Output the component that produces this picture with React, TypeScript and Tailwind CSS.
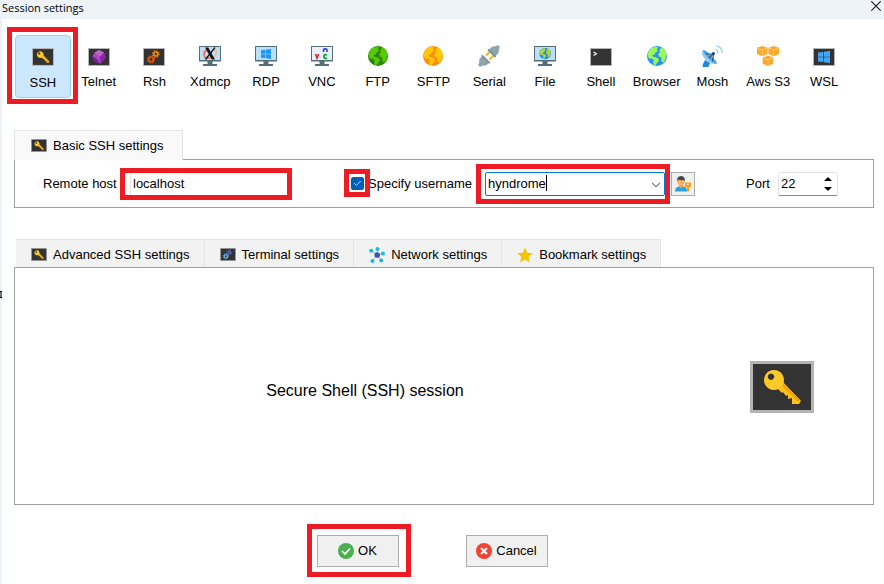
import React, { useState } from 'react';
import { Check, ChevronDown } from 'lucide-react';

interface IconProps {
  className?: string;
}

function Highlight({ className }: { className: string }) {
  return <span aria-hidden="true" className={`pointer-events-none absolute z-10 border-5 border-[#ed1c24] ${className}`} />;
}

function KeyIcon({ className }: IconProps) {
  return (
    <svg viewBox="0 0 64 52" className={className}>
      <rect width="64" height="52" fill="#b4b4b4" />
      <rect x="3" y="3" width="58" height="46" fill="#333" />
      <path d="M27 27 L32 32 L33 31 L36 35 L38 34 L38 38 L42 37 L42 43 L49 43 L51 40 L33 21 Z" fill="#ffc21c" />
      <path d="M31 24 L34 23 L50 39 L48 41 Z" fill="#eda512" />
      <path fillRule="evenodd" d="M24 9 a10 10 0 1 0 .01 0 Z M21 12.5 a3.2 3.2 0 1 1 -.01 0 Z" fill="#ffca28" />
    </svg>
  );
}

function TerminalBox({ className, children }: { className?: string; children: React.ReactNode }) {
  return (
    <svg viewBox="0 0 22 18" className={className}>
      <rect width="22" height="18" fill="#b4b4b4" />
      <rect x="1" y="1" width="20" height="16" fill="#333" />
      {children}
    </svg>
  );
}

function Gears({ front, back }: { front: string; back: string }) {
  return (
    <g fill="none">
      <circle cx="8" cy="11.5" r="2.3" stroke={front} strokeWidth="1.8" />
      <circle cx="8" cy="11.5" r="3.6" stroke={front} strokeWidth="1.3" strokeDasharray="1.4 1.43" />
      <circle cx="12.8" cy="6" r="2" stroke={back} strokeWidth="1.6" />
      <circle cx="12.8" cy="6" r="3.2" stroke={back} strokeWidth="1.2" strokeDasharray="1.3 1.21" />
    </g>
  );
}

function WindowsMark({ x, y, size, color }: { x: number; y: number; size: number; color: string }) {
  return (
    <svg x={x} y={y} width={size} height={size} viewBox="0 0 12 12">
      <path d="M0 1.6 L5.4 .9 V5.7 H0 Z M6 .8 L12 0 V5.7 H6 Z M0 6.3 H5.4 V11.1 L0 10.4 Z M6 6.3 H12 V12 L6 11.2 Z" fill={color} />
    </svg>
  );
}

function Monitor({ children, screen = '#bbdefb' }: { children: React.ReactNode; screen?: string }) {
  return (
    <svg viewBox="0 0 22 20" className="h-5 w-[22px]">
      <path d="M0 0 H22 V15.5 H0 Z M8.5 15 H13.5 V18 H8.5 Z M4 18 H18 V20 H4 Z" fill="#546e7a" />
      <rect x="1" y="1" width="20" height="13" fill={screen} />
      {children}
    </svg>
  );
}

function Globe({ water, land }: { water: string; land: string }) {
  return (
    <>
      <circle cx="10" cy="10" r="10" fill={water} />
      <path d="M8.8 .8 L4.2 2 L1.4 5.6 L.6 9 L2 12.6 L4.6 12.4 L7 14.2 L6.2 16.4 L7.2 19.4 L8.6 18.8 L11.8 14.8 L11.4 12.6 L8 11 L5.8 10.4 L5.4 9 L7.8 8.6 L8.4 6.6 L11 5 L9.8 3.4 L11.2 1.4 Z" fill={land} />
      <path d="M14 1.8 L12.2 4.2 L13 6 L11.2 8 L11.8 10.6 L14.4 11.4 L14.4 15 L16 16.8 L18.4 13.8 L18.8 10.4 L19.8 9 L18.8 5.2 L16.6 2.6 Z" fill={land} />
    </>
  );
}

function GlobeIcon({ water, land }: { water: string; land: string }) {
  return (
    <svg viewBox="0 0 20 20" className="h-5 w-5">
      <Globe water={water} land={land} />
    </svg>
  );
}

const cubes = [
  [5.3, 0],
  [16.7, 0],
  [11, 9.8],
];

const sessions = [
  { name: 'SSH', icon: <KeyIcon className="h-[18px] w-[22px]" /> },
  {
    name: 'Telnet',
    icon: (
      <TerminalBox className="h-[18px] w-[22px]">
        <path d="M11 2 L16 4.5 L17.5 9.5 L12.5 15.8 L6.5 13.5 L4.5 8.5 L6.5 4.5 Z" fill="#ab47bc" />
        <path d="M11 2 L16 4.5 L12 8.5 L6.5 4.5 Z" fill="#ba68c8" />
        <path d="M12 8.5 L16 4.5 L17.5 9.5 L12.5 15.8 Z" fill="#8e24aa" />
        <path d="M4.5 8.5 L8 10 L12.5 15.8 L6.5 13.5 Z" fill="#7b1fa2" />
      </TerminalBox>
    ),
  },
  {
    name: 'Rsh',
    icon: (
      <TerminalBox className="h-[18px] w-[22px]">
        <Gears front="#e65100" back="#fb8c00" />
      </TerminalBox>
    ),
  },
  {
    name: 'Xdmcp',
    icon: (
      <Monitor>
        <path d="M9 4 Q4.5 5 5 9 Q6 13.5 12 11.5" fill="none" stroke="#ff7043" strokeWidth="1.8" />
        <path d="M13.5 4 Q17.5 3 17.5 6.5 Q17 10.5 14 12" fill="none" stroke="#ffb27a" strokeWidth="1.2" />
        <path d="M6 1.5 H9.2 L16 13.5 H12.8 Z" fill="#111" />
        <path d="M16 1.5 L6.5 13.5" stroke="#111" strokeWidth="1.3" />
      </Monitor>
    ),
  },
  {
    name: 'RDP',
    icon: (
      <Monitor>
        <WindowsMark x={6} y={3} size={10} color="#2196f3" />
      </Monitor>
    ),
  },
  {
    name: 'VNC',
    icon: (
      <Monitor screen="#e6f1fb">
        <path d="M4.5 8 L6 12.2 L7.5 8" fill="none" stroke="#ee1c24" strokeWidth="1.6" />
        <path d="M12.5 6 V4 Q12.5 2.8 14.3 2.8 Q16 2.8 16 4 V6" fill="none" stroke="#2a2af5" strokeWidth="1.5" />
        <path d="M16 9 Q12.8 8 12.8 10.5 Q12.8 13 16 12" fill="none" stroke="#12a035" strokeWidth="1.7" />
      </Monitor>
    ),
  },
  { name: 'FTP', icon: <GlobeIcon water="#2e8505" land="#56cb00" /> },
  { name: 'SFTP', icon: <GlobeIcon water="#ff8f00" land="#ffc90a" /> },
  {
    name: 'Serial',
    icon: (
      <svg viewBox="0 0 22 22" className="-my-px h-[22px] w-[22px]">
        <path d="M8 10.5 L12.5 6 M11.5 14.5 L16.5 9.5" stroke="#ffb30f" strokeWidth="2" />
        <path d="M10.5 5 L14 1.8 L17.8 1 L20 0 L22 2 L21 4.4 L20.5 8 L17.2 11.5 Z" fill="#90a4ae" />
        <path d="M4.5 10.5 L11.5 17.5 L8 20.6 L4 20.8 L2 22 L0 20 L1.2 18 L1.4 14 Z" fill="#90a4ae" />
        <path d="M10 4.4 L17.6 12 M3.9 10.4 L11.8 18.2" stroke="#78909c" strokeWidth="1.8" />
      </svg>
    ),
  },
  {
    name: 'File',
    icon: (
      <Monitor>
        <svg x="5.3" y="1.7" width="11.6" height="11.6" viewBox="0 0 20 20">
          <Globe water="#1b8be8" land="#b4d435" />
        </svg>
      </Monitor>
    ),
  },
  {
    name: 'Shell',
    icon: (
      <TerminalBox className="h-[18px] w-[22px]">
        <path d="M3.5 4 L6.5 5.8 L3.5 7.5" fill="none" stroke="#fff" strokeWidth="1.1" />
      </TerminalBox>
    ),
  },
  { name: 'Browser', icon: <GlobeIcon water="#2196f3" land="#9cf75a" /> },
  {
    name: 'Mosh',
    icon: (
      <svg viewBox="0 0 22 22" className="-my-px h-[22px] w-[22px]">
        <path d="M4 15 L9 18 L7.5 22 H1.5 L2 19 Z" fill="#1e88e5" />
        <path d="M2 5 Q-.8 9.5 4.5 14.8 Q10 20 16 18.8 Z" fill="#90caf9" />
        <path d="M2 5 Q4 4.5 9.6 10 Q15.8 16.4 16 18.8 Q13 18.8 7.5 13.2 Q2 7.6 2 5 Z" fill="#42a5f5" />
        <path d="M4.5 9 H12 M12.5 9 L11.5 16.5 M8 13 L12 9" stroke="#37566b" strokeWidth="1.2" />
        <circle cx="12.4" cy="8.6" r="1.6" fill="#0d47a1" />
        <path d="M14.5 4.5 Q17.2 5.5 17 8.6 M15.3 .8 Q21.5 2 21 8.2" fill="none" stroke="#90caf9" strokeWidth="1.2" />
      </svg>
    ),
  },
  {
    name: 'Aws S3',
    icon: (
      <svg viewBox="0 0 22 20" className="h-5 w-[22px]">
        {cubes.map(([x, y]) => (
          <g key={`${x}-${y}`} transform={`translate(${x} ${y})`}>
            <path d="M0 0 L5.3 1.8 V8 L0 10.2 L-5.3 8 V1.8 Z" fill="#ffa726" />
            <path d="M-4.6 2.3 L0 4 L4.6 2.3 M0 4 V9.5" fill="none" stroke="#ffdca8" strokeWidth=".7" />
          </g>
        ))}
      </svg>
    ),
  },
  {
    name: 'WSL',
    icon: (
      <TerminalBox className="h-[18px] w-[22px]">
        <WindowsMark x={5} y={3} size={12} color="#42a5f5" />
      </TerminalBox>
    ),
  },
];

const networkNodes = [
  [2.2, 3.8],
  [8.5, 2],
  [14, 6.5],
  [12.3, 13.6],
  [3.5, 14],
];

const tabs = [
  { label: 'Advanced SSH settings', icon: <KeyIcon className="h-[13px] w-4" /> },
  {
    label: 'Terminal settings',
    icon: (
      <TerminalBox className="h-[13px] w-4">
        <Gears front="#5bb5f5" back="#5c6bd0" />
      </TerminalBox>
    ),
  },
  {
    label: 'Network settings',
    icon: (
      <svg viewBox="0 0 16 16" className="h-4 w-4">
        {networkNodes.map(([x, y]) => (
          <g key={`${x}-${y}`}>
            <path d={`M8 8 L${x} ${y}`} stroke="#9fb8d8" strokeWidth="1" />
            <circle cx={x} cy={y} r="2" fill="#14bcd6" />
          </g>
        ))}
        <circle cx="8.2" cy="8" r="2.8" fill="#3f51b5" />
      </svg>
    ),
  },
  {
    label: 'Bookmark settings',
    icon: (
      <svg viewBox="0 0 16 16" className="h-4 w-4">
        <path d="M8 .5 L10.2 5.8 L16 6.2 L11.6 9.9 L13 15.5 L8 12.5 L3 15.5 L4.4 9.9 L0 6.2 L5.8 5.8 Z" fill="#f5c400" />
      </svg>
    ),
  },
];

export default function App() {
  const [host, setHost] = useState('localhost');
  const [username, setUsername] = useState('hyndrome');
  const [port, setPort] = useState(22);
  const [useName, setUseName] = useState(true);

  return (
    <div className="relative flex min-h-screen flex-col border-l-2 border-[#edf1f8] bg-white font-['Liberation_Sans',Arial,sans-serif] text-[13px] leading-4 text-black">
      <span className="absolute top-[291px] -left-0.5 h-[7px] w-0.5 border-y border-black bg-gray-500" />

      <header className="flex h-[19px] items-center justify-between bg-[#eef3f8]">
        <h1 className="-mt-1 font-['Open_Sans',sans-serif] text-[11px]">Session settings</h1>
        <button aria-label="Close" className="-mt-2 mr-[3px]">
          <svg viewBox="0 0 10 10" className="h-2.5 w-2.5">
            <path d="M.3 .3 L9.7 9.7 M9.7 .3 L.3 9.7" stroke="#1a1a1a" strokeWidth="1.1" />
          </svg>
        </button>
      </header>

      <nav className="mt-4 mr-8 ml-[13px] flex">
        {sessions.map((session, i) => (
          <button
            key={session.name}
            className={`relative flex h-[63px] min-w-0 flex-1 flex-col items-center rounded-sm border pt-2.5 whitespace-nowrap ${
              i === 0 ? 'border-[#99d1ff] bg-[#cce8ff]' : 'border-transparent'
            }`}
          >
            <span className="flex h-5 items-end">{session.icon}</span>
            <span className={i === 0 ? 'mt-[9px]' : 'mt-2'}>{session.name}</span>
            {i === 0 && <Highlight className="-top-[9px] -right-2 -bottom-[7px] -left-[9px]" />}
          </button>
        ))}
      </nav>

      <section className="mt-8 mr-2.5 ml-3">
        <h2 className="relative -mb-px flex h-[30px] w-[169px] items-center gap-1.5 border-x border-t border-[#e3e3e3] bg-[#f9f9f9] pl-4">
          <KeyIcon className="h-[13px] w-4" />
          Basic SSH settings
        </h2>
        <div className="flex h-[49px] items-center border border-[#a0a0a0] pl-7 whitespace-nowrap">
          <label htmlFor="host" className="w-[82px]">
            Remote host *
          </label>
          <div className="relative ml-[5px] w-[158px]">
            <input
              id="host"
              value={host}
              onChange={(e) => setHost(e.target.value)}
              className="h-6 w-full border border-[#e5e5e5] px-0.5 outline-none"
            />
            <Highlight className="-top-1 -right-1 -bottom-1 -left-2.5" />
          </div>

          <div className="relative ml-[63px] flex h-[13px] w-[13px]">
            <input
              id="use-name"
              type="checkbox"
              checked={useName}
              onChange={(e) => setUseName(e.target.checked)}
              className="h-[13px] w-[13px] appearance-none rounded-xs border border-[#005fb8] checked:bg-[#005fb8]"
            />
            {useName && <Check className="pointer-events-none absolute top-0.5 left-0.5 h-[9px] w-[9px] text-white" />}
            <Highlight className="-top-2 -right-1.5 -bottom-[7px] -left-[7px]" />
          </div>
          <label htmlFor="use-name" className="ml-1 w-[102px]">
            Specify username
          </label>

          <div className="relative ml-[15px] w-[180px]">
            <input
              role="combobox"
              aria-label="Username"
              aria-expanded="false"
              value={username}
              onChange={(e) => setUsername(e.target.value)}
              className="h-6 w-full rounded-xs border border-[#0078d4] pr-6 pl-0.5 outline-none"
            />
            <span className="pointer-events-none absolute top-[3px] left-[61px] h-4 w-px bg-black" />
            <button aria-label="Show usernames" className="absolute top-1.5 right-0.5">
              <ChevronDown className="h-3.5 w-3.5 text-gray-600" strokeWidth={1.8} />
            </button>
            <Highlight className="-top-2 -right-[5px] -bottom-2 -left-[9px]" />
          </div>
          <button
            aria-label="Manage credentials"
            className="ml-1.5 flex h-6 w-6 items-center justify-center border border-[#adadad] bg-[#f0f0f0]"
          >
            <svg viewBox="0 0 16 16" className="h-4 w-4">
              <path d="M0 15.5 Q0 11 4 10.5 H9 Q12 11 12 15.5 Z" fill="#29a3e0" />
              <path d="M4.2 8.5 H8 V11 L6 12.5 L4.2 11 Z" fill="#f29a2e" />
              <ellipse cx="6" cy="5.5" rx="3.4" ry="4.3" fill="#ffb25c" />
              <path d="M2.3 6 Q1.4 .2 6.3 .1 Q10.6 .4 9.7 6 L8.8 4 Q6 4.6 3.4 3.6 Z" fill="#37474f" />
              <path fillRule="evenodd" d="M10 6.5 H16 V11 H14.2 V15.5 H12 V11 H10 Z M12 7.8 H14 V9 H12 Z" fill="#ff9d0a" />
            </svg>
          </button>

          <label htmlFor="port" className="ml-[51px] w-6">
            Port
          </label>
          <div className="relative ml-2 w-[60px]">
            <input
              id="port"
              value={port}
              onChange={(e) => setPort(Number(e.target.value) || 0)}
              className="h-6 w-full rounded-xs border border-[#e5e5e5] border-b-[#868686] pr-5 pl-0.5 outline-none"
            />
            <div className="absolute top-[5px] right-1.5 flex flex-col gap-1.5">
              <button aria-label="Increase port" onClick={() => setPort(port + 1)}>
                <svg viewBox="0 0 8 4" className="h-1 w-2">
                  <path d="M0 4 L4 0 L8 4 Z" />
                </svg>
              </button>
              <button aria-label="Decrease port" onClick={() => setPort(port - 1)}>
                <svg viewBox="0 0 8 4" className="h-1 w-2">
                  <path d="M0 0 L4 4 L8 0 Z" />
                </svg>
              </button>
            </div>
          </div>
        </div>
      </section>

      <section className="mt-[31px] mr-2.5 ml-3 flex flex-1 flex-col">
        <div className="ml-0.5 flex h-7">
          {tabs.map((tab) => (
            <button
              key={tab.label}
              className="flex items-center gap-1.5 border-t border-r border-[#e3e3e3] bg-[#f2f2f2] pt-0.5 pr-3.5 pl-[15px] whitespace-nowrap"
            >
              {tab.icon}
              {tab.label}
            </button>
          ))}
        </div>
        <div className="flex flex-1 items-center border border-[#a0a0a0] pt-0.5 pr-[59px]">
          <p className="mr-[35px] flex-1 pt-2 text-center text-base">Secure Shell (SSH) session</p>
          <KeyIcon className="h-[52px] w-16" />
        </div>
      </section>

      <footer className="mt-[30px] flex justify-center gap-[67px] pr-[22px] pb-[17px]">
        <button className="relative flex h-8 w-[82px] items-center justify-center gap-1 border border-[#adadad] bg-[#f0f0f0]">
          <svg viewBox="0 0 16 16" className="h-4 w-4">
            <circle cx="8" cy="8" r="8" fill="#4caf50" />
            <path d="M4 8 L7 11 L12 5.5" fill="none" stroke="#fff" strokeWidth="1.7" />
          </svg>
          OK
          <Highlight className="-top-3 -right-[13px] -bottom-[11px] -left-[11px]" />
        </button>
        <button className="flex h-8 w-[82px] items-center justify-center gap-1 border border-[#adadad] bg-[#f0f0f0]">
          <svg viewBox="0 0 16 16" className="h-4 w-4">
            <circle cx="8" cy="8" r="8" fill="#f44336" />
            <path d="M5 5 L11 11 M11 5 L5 11" stroke="#fff" strokeWidth="2" />
          </svg>
          Cancel
        </button>
      </footer>
    </div>
  );
}
